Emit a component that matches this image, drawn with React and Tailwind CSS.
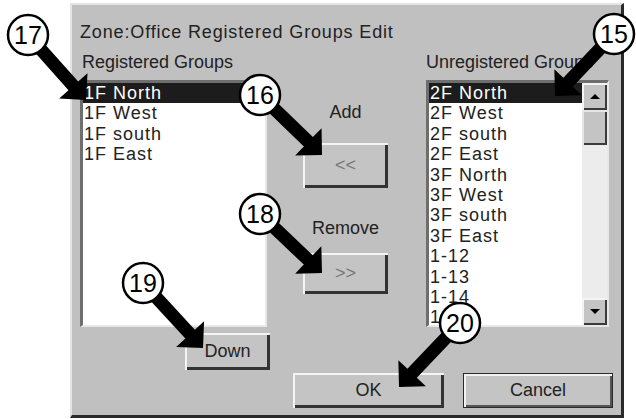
import React from 'react';

const font = { fontFamily: '"Liberation Sans", Arial, sans-serif' };

const registered = ['1F North', '1F West', '1F south', '1F East'];
const unregistered = [
    '2F North', '2F West', '2F south', '2F East',
    '3F North', '3F West', '3F south', '3F East',
    '1-12', '1-13', '1-14', '1-15',
];

const callouts = [
    { n: '17', c: [28, 35], t: [86, 100] },
    { n: '16', c: [260, 95], t: [322, 155] },
    { n: '18', c: [260, 214], t: [322, 273] },
    { n: '19', c: [143, 283], t: [203, 348] },
    { n: '15', c: [614, 34], t: [555, 96] },
    { n: '20', c: [460, 323], t: [399, 387] },
];

function arrowPoints(c, t) {
    const dx = t[0] - c[0];
    const dy = t[1] - c[1];
    const len = Math.hypot(dx, dy);
    const d = [dx / len, dy / len];
    const n = [-d[1], d[0]];
    const h = 19;
    const hw = 19;
    const ww = 6.5;
    const b = [t[0] - d[0] * h, t[1] - d[1] * h];
    const p = (base, k) => `${base[0] + n[0] * k},${base[1] + n[1] * k}`;
    return [p(c, ww), p(b, ww), p(b, hw), `${t[0]},${t[1]}`, p(b, -hw), p(b, -ww), p(c, -ww)].join(' ');
}

function ListBox({ items, width, scroll }) {
    return (
        <div
            className="h-[247px] flex bg-white border-t-[3px] border-l-[3px] border-t-[#6e6e6e] border-l-[#6e6e6e] border-b-2 border-r-2 border-b-[#e8e8e8] border-r-[#e8e8e8] overflow-hidden"
            style={{ width }}
        >
            <div className="flex-1 flex flex-col">
                {items.map((item, i) => (
                    <div
                        key={item}
                        className={`h-[20.4px] shrink-0 pl-[1px] text-[18px] leading-[20.4px] tracking-[1px] whitespace-nowrap ${
                            i === 0 ? 'bg-[#1c1c1c] text-white' : 'text-[#222]'
                        }`}
                    >
                        {item}
                    </div>
                ))}
            </div>
            {scroll && (
                <div className="w-[25px] flex flex-col bg-[#ececec]">
                    <div className="h-[27px] flex items-center justify-center bg-[#c4c4c4] shadow-[inset_2px_2px_0_#f4f4f4,inset_-2px_-2px_0_#3a3a3a]">
                        <div className="w-0 h-0 border-l-[5px] border-r-[5px] border-b-[5px] border-l-transparent border-r-transparent border-b-black" />
                    </div>
                    <div className="h-[35px] bg-[#c4c4c4] shadow-[inset_2px_2px_0_#e6e6e6,inset_-2px_-2px_0_#3a3a3a]" />
                    <div className="flex-1" />
                    <div className="h-[27px] flex items-center justify-center bg-[#c4c4c4] shadow-[inset_2px_2px_0_#f4f4f4,inset_-2px_-2px_0_#3a3a3a]">
                        <div className="w-0 h-0 border-l-[5px] border-r-[5px] border-t-[5px] border-l-transparent border-r-transparent border-t-black" />
                    </div>
                </div>
            )}
        </div>
    );
}

function Btn({ children, className = '', muted, framed }) {
    return (
        <div
            className={`flex items-center justify-center bg-[#c4c4c4] text-[18px] ${
                muted ? 'text-[#777]' : 'text-[#222]'
            } ${
                framed
                    ? 'border border-[#2a2a2a] shadow-[inset_2px_2px_0_#f2f2f2,inset_-2px_-2px_0_#555]'
                    : 'shadow-[inset_2px_2px_0_#f4f4f4,inset_-3px_-3px_0_#333]'
            } ${className}`}
        >
            {children}
        </div>
    );
}

export default function App() {
    return (
        <div className="relative w-[636px] h-[419px] bg-white overflow-hidden" style={font}>
            {/* Dialog */}
            <div className="ml-[70px] pt-[3px]">
                <div className="w-[554px] h-[415px] bg-[#c0c0c0] border-l-2 border-t-2 border-l-[#e4e4e4] border-t-[#e4e4e4] border-r-[3px] border-b-[3px] border-r-[#2a2a2a] border-b-[#2a2a2a] pl-[8px] pt-[17px] text-[#222] overflow-hidden">
                    <div className="h-5 leading-5 text-[18px] tracking-[0.85px] whitespace-nowrap">
                        Zone:Office Registered Groups Edit
                    </div>

                    <div className="mt-[10px] h-5 flex text-[18px] leading-5 whitespace-nowrap">
                        <div className="w-[346px] pl-[2px]">Registered Groups</div>
                        <div>Unregistered Groups</div>
                    </div>

                    <div className="mt-[8px] flex items-start">
                        {/* Left column */}
                        <div className="w-[190px] flex flex-col">
                            <ListBox items={registered} width={187} />
                            <Btn className="mt-[6px] ml-[105px] w-[85px] h-[37px]">Down</Btn>
                        </div>

                        {/* Middle column */}
                        <div className="ml-[33px] w-[85px] flex flex-col items-center text-[18px]">
                            <div className="mt-[22px] h-5 leading-5">Add</div>
                            <Btn muted className="mt-[21px] w-full h-[45px]">&lt;&lt;</Btn>
                            <div className="mt-[30px] h-5 leading-5">Remove</div>
                            <Btn muted className="mt-[15px] w-full h-[41px]">&gt;&gt;</Btn>
                        </div>

                        {/* Right column */}
                        <div className="ml-[38px]">
                            <ListBox items={unregistered} width={183} scroll />
                        </div>
                    </div>

                    <div className="mt-[3px] flex">
                        <Btn className="ml-[213px] w-[151px] h-[35px]">OK</Btn>
                        <Btn framed className="ml-[19px] w-[150px] h-[35px]">Cancel</Btn>
                    </div>
                </div>
            </div>

            {/* Callouts */}
            <svg className="absolute inset-0 pointer-events-none" width="636" height="419" viewBox="0 0 636 419">
                {callouts.map((co) => (
                    <polygon key={`a${co.n}`} points={arrowPoints(co.c, co.t)} fill="#000" />
                ))}
                {callouts.map((co) => (
                    <g key={`c${co.n}`}>
                        <circle cx={co.c[0]} cy={co.c[1]} r="20" fill="#fff" stroke="#000" strokeWidth="2.5" />
                        <text
                            x={co.c[0]}
                            y={co.c[1] + 9}
                            textAnchor="middle"
                            fontSize="25"
                            fontFamily='"Liberation Sans", Arial, sans-serif'
                            fill="#000"
                        >
                            {co.n}
                        </text>
                    </g>
                ))}
            </svg>
        </div>
    );
}
